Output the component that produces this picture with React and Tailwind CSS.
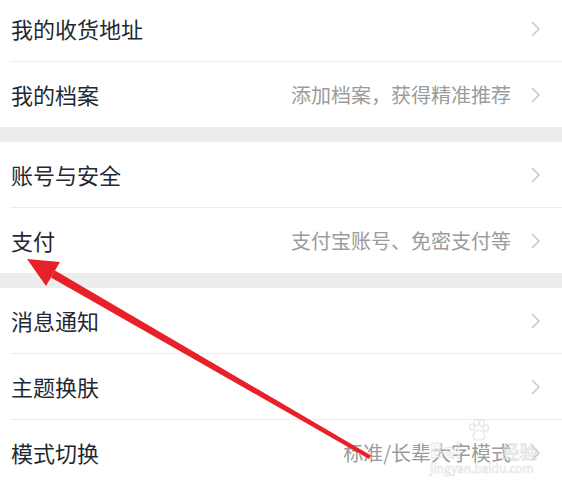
import React from 'react';

const groups = [
  [
    { title: '我的收货地址' },
    { title: '我的档案', hint: '添加档案，获得精准推荐' },
  ],
  [
    { title: '账号与安全' },
    { title: '支付', hint: '支付宝账号、免密支付等' },
  ],
  [
    { title: '消息通知' },
    { title: '主题换肤' },
    { title: '模式切换', hint: '标准/长辈大字模式' },
  ],
];

const Chevron = () => (
  <svg width="10" height="16" viewBox="0 0 10 16" fill="none" className="ml-5 shrink-0">
    <path d="M1.5 1.5L8 8L1.5 14.5" stroke="#c9c9c9" strokeWidth="1.6" strokeLinecap="round" strokeLinejoin="round" />
  </svg>
);

const Row = ({ title, hint, last }) => (
  <div className="pl-[10px] bg-white">
    <div
      className={
        'flex items-center justify-between pl-[1px] pr-[21px] ' +
        (last ? 'h-[65px]' : 'h-[66px] border-b border-[#ececec]')
      }
    >
      <span className="text-[22px] text-[#1f2932]">{title}</span>
      <div className="flex items-center">
        {hint && <span className="text-[20px] text-[#9b9b9b]">{hint}</span>}
        <Chevron />
      </div>
    </div>
  </div>
);

export default function App() {
  return (
    <div
      className="relative w-[562px] h-[485px] overflow-hidden bg-[#ededed]"
      style={{ fontFamily: '"Noto Sans CJK SC", "Noto Sans", sans-serif' }}
    >
      <div className="-mt-[4px] flex flex-col">
        {groups.map((rows, gi) => (
          <div key={gi} className={gi > 0 ? 'mt-[15px]' : ''}>
            {rows.map((r, i) => (
              <Row key={r.title} {...r} last={i === rows.length - 1} />
            ))}
          </div>
        ))}
      </div>

      {/* red annotation arrow */}
      <svg className="absolute inset-0 pointer-events-none" width="562" height="485" viewBox="0 0 562 485">
        <polygon points="27,259 46,286 60,262" fill="#e8202a" />
        <polygon points="51,277.5 55,270.5 371,455.5 369,459" fill="#e8202a" />
      </svg>

      {/* watermark */}
      <div className="absolute left-[430px] top-[418px] pointer-events-none opacity-60">
        <svg width="24" height="24" viewBox="0 0 24 24" className="ml-[36px]" fill="none" stroke="#d6d6d6" strokeWidth="1.2">
          <ellipse cx="6" cy="9" rx="2.5" ry="3.2" />
          <ellipse cx="10.5" cy="4.5" rx="2.5" ry="3.2" />
          <ellipse cx="16" cy="5" rx="2.5" ry="3.2" />
          <ellipse cx="20" cy="10" rx="2.5" ry="3.2" />
          <path d="M7 19c0-4 3-7 6-7s6 3 6 7c0 2-2 3-6 3s-6-1-6-3z" />
        </svg>
        <div className="-mt-[2px] flex items-end leading-none">
          <span className="text-[20px] font-bold text-white" style={{ WebkitTextStroke: '0.8px #cfcfcf' }}>Bai</span>
          <span className="ml-[40px] text-[18px] text-white" style={{ WebkitTextStroke: '0.8px #cfcfcf' }}>经验</span>
        </div>
        <div className="mt-[2px] text-[12px] leading-none text-white" style={{ WebkitTextStroke: '0.6px #d0d0d0' }}>
          jingyan.baidu.com
        </div>
      </div>
    </div>
  );
}
